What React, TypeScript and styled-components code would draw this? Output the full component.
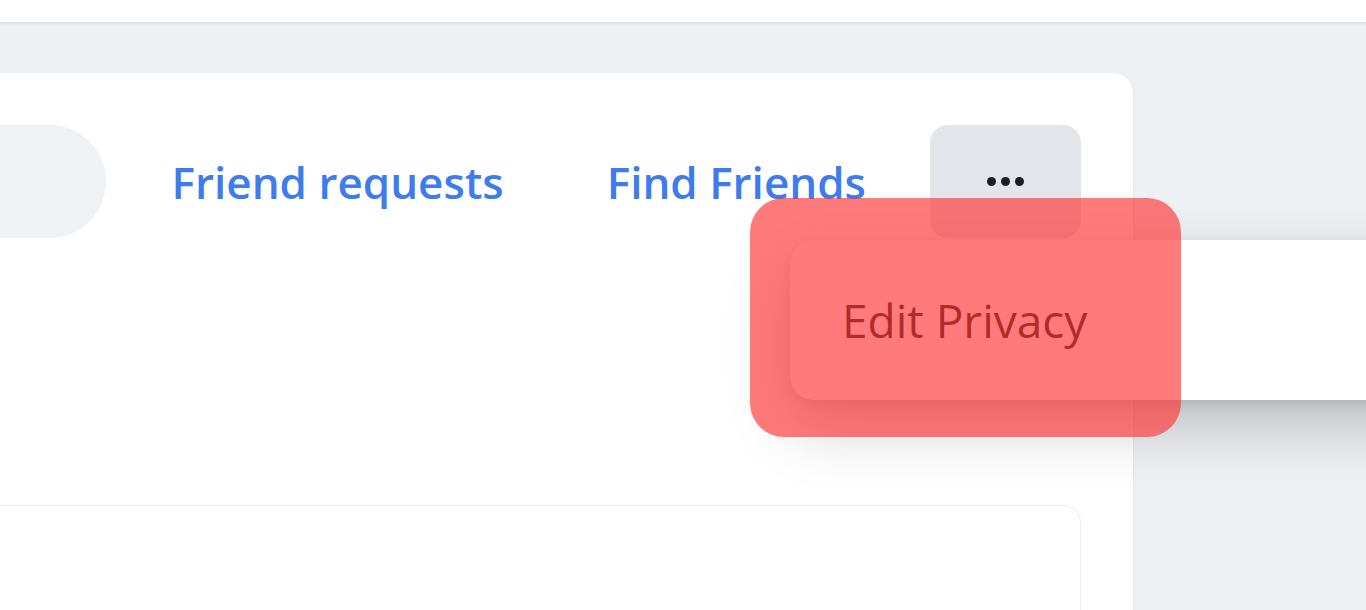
import React from "react";
import styled, { createGlobalStyle } from "styled-components";

const Global = createGlobalStyle`
  html, body { margin: 0; padding: 0; }
  body { font-family: "Open Sans", "Noto Sans", sans-serif; background: #eff0f4; }
`;

const Page = styled.div`
  position: relative;
  width: 1366px;
  height: 610px;
  overflow: hidden;
  background: #eff0f4;
`;

const TopBar = styled.header`
  height: 22px;
  background: #ffffff;
  box-shadow: 0 1px 3px rgba(0, 0, 0, 0.12);
  position: relative;
  z-index: 1;
`;

const Main = styled.main`
  padding-top: 51px;
`;

const Card = styled.section`
  margin-left: -400px;
  width: 1533px;
  height: 600px;
  background: #ffffff;
  border-radius: 20px;
  box-shadow: 0 1px 2px rgba(0, 0, 0, 0.14);
  padding: 52px 52px 0 0;
  box-sizing: border-box;
`;

const Toolbar = styled.div`
  display: flex;
  align-items: center;
  justify-content: flex-end;
  height: 113px;
`;

const SearchPill = styled.div`
  width: 400px;
  height: 113px;
  border-radius: 57px;
  background: #f0f1f5;
`;

const NavLink = styled.a<{ $gap: number }>`
  margin-left: ${(p) => p.$gap}px;
  font-size: 44px;
  font-weight: 600;
  color: #3e7ced;
  text-decoration: none;
  white-space: nowrap;
`;

const MoreButton = styled.button`
  margin-left: 64px;
  width: 151px;
  height: 113px;
  border: none;
  border-radius: 18px;
  background: #e4e5ea;
  display: flex;
  align-items: center;
  justify-content: center;
  gap: 5px;
  padding: 0;
`;

const Dot = styled.span`
  width: 9px;
  height: 9px;
  border-radius: 50%;
  background: #1c1e21;
`;

const InnerCard = styled.div`
  margin-top: 267px;
  height: 200px;
  border-radius: 18px;
  border: 1px solid #eeeeef;
  box-shadow: 0 0 3px rgba(0, 0, 0, 0.03);
`;

const Menu = styled.div`
  position: absolute;
  left: 790px;
  top: 240px;
  width: 700px;
  height: 160px;
  background: #ffffff;
  border-radius: 24px;
  box-shadow: 0 26px 64px rgba(0, 0, 0, 0.22), 0 4px 12px rgba(0, 0, 0, 0.1);
  display: flex;
  align-items: center;
  padding-left: 52px;
  box-sizing: border-box;
  z-index: 2;
`;

const MenuItem = styled.span`
  font-size: 46px;
  color: #1c1e21;
`;

const Highlight = styled.div`
  position: absolute;
  left: 750px;
  top: 198px;
  width: 431px;
  height: 239px;
  border-radius: 34px;
  background: rgba(255, 52, 52, 0.65);
  z-index: 3;
`;

export default function App() {
  return (
    <Page>
      <Global />
      <TopBar />
      <Main>
        <Card>
          <Toolbar>
            <SearchPill />
            <NavLink $gap={66}>Friend requests</NavLink>
            <NavLink $gap={103}>Find Friends</NavLink>
            <MoreButton aria-label="More">
              <Dot />
              <Dot />
              <Dot />
            </MoreButton>
          </Toolbar>
          <InnerCard />
        </Card>
      </Main>
      <Menu>
        <MenuItem>Edit Privacy</MenuItem>
      </Menu>
      <Highlight />
    </Page>
  );
}
